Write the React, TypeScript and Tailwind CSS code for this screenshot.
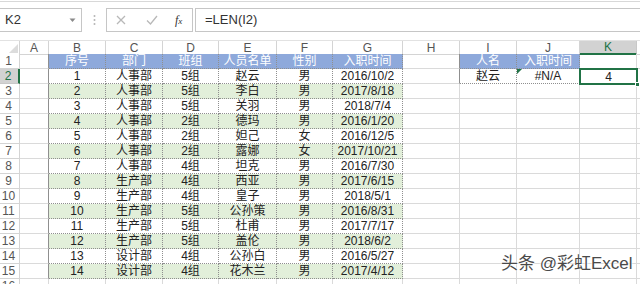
import React from "react";

const FONT = '"Liberation Sans", "Noto Sans CJK SC", sans-serif';

const rows: [number, string, string, string, string, string][] = [
  [1, "人事部", "5组", "赵云", "男", "2016/10/2"],
  [2, "人事部", "5组", "李白", "男", "2017/8/18"],
  [3, "人事部", "5组", "关羽", "男", "2018/7/4"],
  [4, "人事部", "2组", "德玛", "男", "2016/1/20"],
  [5, "人事部", "2组", "妲己", "女", "2016/12/5"],
  [6, "人事部", "2组", "露娜", "女", "2017/10/21"],
  [7, "人事部", "4组", "坦克", "男", "2016/7/30"],
  [8, "生产部", "4组", "西亚", "男", "2017/6/15"],
  [9, "生产部", "4组", "皇子", "男", "2018/5/1"],
  [10, "生产部", "5组", "公孙策", "男", "2016/8/31"],
  [11, "生产部", "5组", "杜甫", "男", "2017/7/17"],
  [12, "生产部", "5组", "盖伦", "男", "2018/6/2"],
  [13, "设计部", "4组", "公孙白", "男", "2016/5/27"],
  [14, "设计部", "4组", "花木兰", "男", "2017/4/12"],
];

const gridCols =
  "grid grid-cols-[20px_29px_57px_57px_56px_58px_56px_70px_57px_57px_63px_57px_3px]";

function Plain({ dottedRight = false }: { dottedRight?: boolean }) {
  return (
    <div
      className={
        dottedRight
          ? "border-b border-r border-b-[#dadada] border-r-[#8f8f8f] border-r-dotted"
          : "border-b border-r border-[#dadada]"
      }
    />
  );
}

function TCell({
  children,
  kind,
  bottomDotted = true,
}: {
  children?: React.ReactNode;
  kind: "head" | "green" | "white";
  bottomDotted?: boolean;
}) {
  const bg =
    kind === "head"
      ? "bg-[#8ea9db] text-white"
      : kind === "green"
      ? "bg-[#e2efda] text-[#222]"
      : "bg-white text-[#222]";
  return (
    <div
      className={`${bg} flex items-center justify-center border-r border-b border-dotted border-[#8f8f8f] ${
        bottomDotted ? "" : ""
      } text-[12px] leading-none whitespace-nowrap overflow-hidden`}
    >
      {children}
    </div>
  );
}

function RowHead({ n, active = false }: { n: number; active?: boolean }) {
  return (
    <div
      className={
        active
          ? "bg-[#d2d2d2] text-[#217346] border-b border-[#c8c8c8] border-r-2 border-r-[#217346] flex items-center justify-center text-[12px] leading-none pr-[2px]"
          : "bg-white text-[#555] border-b border-r border-[#d4d4d4] flex items-center justify-center text-[12px] leading-none pr-[2px]"
      }
    >
      {n}
    </div>
  );
}

export default function App() {
  const colLetters = ["A", "B", "C", "D", "E", "F", "G", "H", "I", "J", "K"];
  return (
    <div
      className="w-[640px] h-[284px] overflow-hidden bg-white relative"
      style={{ fontFamily: FONT }}
    >
      {/* formula bar */}
      <div className="h-[40px] flex flex-col">
        <div className="h-[2px] bg-white border-b border-[#d8d8d8]" />
        <div className="h-[6px]" />
        <div className="h-[24px] flex items-stretch">
          <div className="w-[82px] border border-l-0 border-[#c6c6c6] flex items-center justify-between pl-[5px] pr-[5px]">
            <span className="text-[13px] text-[#333]">K2</span>
            <svg width="7" height="5" viewBox="0 0 7 5">
              <path d="M0.5 0.5 L3.5 4 L6.5 0.5 Z" fill="#8a8a8a" />
            </svg>
          </div>
          <div className="w-[24px] flex items-center justify-center">
            <svg width="3" height="12" viewBox="0 0 3 12">
              <circle cx="1.5" cy="2" r="1" fill="#b5b5b5" />
              <circle cx="1.5" cy="6" r="1" fill="#b5b5b5" />
              <circle cx="1.5" cy="10" r="1" fill="#b5b5b5" />
            </svg>
          </div>
          <div className="w-[87px] border border-[#c6c6c6] flex items-center">
            <svg className="ml-[9px]" width="10" height="10" viewBox="0 0 10 10">
              <path d="M1 1 L9 9 M9 1 L1 9" stroke="#b8b8b8" strokeWidth="1.3" />
            </svg>
            <svg className="ml-[20px]" width="12" height="10" viewBox="0 0 12 10">
              <path d="M1 5.5 L4.5 9 L11 1" stroke="#b8b8b8" strokeWidth="1.3" fill="none" />
            </svg>
            <span
              className="ml-[17px] text-[12px] italic text-[#333]"
              style={{ fontFamily: '"Liberation Serif", serif' }}
            >
              f<span className="text-[9px]">x</span>
            </span>
          </div>
          <div className="w-[2px]" />
          <div className="flex-1 border border-r-0 border-[#c6c6c6] flex items-center pl-[9px]">
            <span className="text-[13px] text-[#333]">=LEN(I2)</span>
          </div>
        </div>
        <div className="flex-1" />
      </div>

      {/* column headers */}
      <div className={`${gridCols} h-[14px] border-t border-[#e2e2e2]`}>
        <div className="border-r border-b border-[#d4d4d4] flex items-end justify-end pr-[1px] pb-[1px]">
          <svg width="9" height="9" viewBox="0 0 9 9">
            <path d="M9 0 L9 9 L0 9 Z" fill="#dcdcdc" />
          </svg>
        </div>
        {colLetters.map((l) =>
          l === "K" ? (
            <div
              key={l}
              className="bg-[#d2d2d2] text-[#217346] border-r border-[#c8c8c8] border-b-2 border-b-[#217346] flex items-center justify-center text-[12px] leading-none"
            >
              {l}
            </div>
          ) : (
            <div
              key={l}
              className="text-[#555] border-r border-b border-[#d4d4d4] flex items-center justify-center text-[12px] leading-none"
            >
              {l}
            </div>
          )
        )}
        <div className="border-b border-[#d4d4d4]" />
      </div>

      {/* row 1 */}
      <div className={`${gridCols} h-[15px]`}>
        <RowHead n={1} />
        <Plain dottedRight />
        {["序号", "部门", "班组", "人员名单", "性别", "入职时间"].map((h) => (
          <TCell key={h} kind="head">
            {h}
          </TCell>
        ))}
        <Plain dottedRight />
        <TCell kind="head">人名</TCell>
        <TCell kind="head">入职时间</TCell>
        <Plain />
        <div className="border-b border-[#dadada]" />
      </div>

      {/* data rows */}
      {rows.map((r, i) => {
        const rowNum = i + 2;
        const kind = i % 2 === 1 ? "green" : "white";
        return (
          <div key={rowNum} className={`${gridCols} h-[15px]`}>
            <RowHead n={rowNum} active={rowNum === 2} />
            <Plain dottedRight />
            {r.map((v, j) => (
              <TCell key={j} kind={kind}>
                {v}
              </TCell>
            ))}
            {rowNum === 2 ? (
              <>
                <Plain dottedRight />
                <TCell kind="white">赵云</TCell>
                <div className="relative bg-white flex items-center justify-center border-r border-b border-dotted border-[#8f8f8f] text-[12px] leading-none text-[#222]">
                  <svg className="absolute left-0 top-0" width="5" height="5" viewBox="0 0 5 5">
                    <path d="M0 0 L5 0 L0 5 Z" fill="#217346" />
                  </svg>
                  #N/A
                </div>
                <div className="relative flex items-center justify-center text-[12px] leading-none text-[#222]">
                  <div className="absolute left-[-1px] top-[-1px] right-[-1px] bottom-[-1px] border-2 border-[#217346]" />
                  <div className="absolute right-[-3px] bottom-[-3px] w-[5px] h-[5px] bg-[#217346] border border-white" />
                  4
                </div>
                <div className="border-b border-[#dadada]" />
              </>
            ) : (
              <>
                <Plain />
                <Plain />
                <Plain />
                <Plain />
                <div className="border-b border-[#dadada]" />
              </>
            )}
          </div>
        );
      })}

      {/* row 16 partial */}
      <div className={`${gridCols} h-[15px]`}>
        <RowHead n={16} />
        {Array.from({ length: 11 }).map((_, k) => (
          <Plain key={k} />
        ))}
        <div />
      </div>

      {/* watermark */}
      <div
        className="absolute left-[501px] top-[255px] text-[17px] leading-none text-[#4a4a4a] whitespace-nowrap"
        style={{ textShadow: "0 0 2px #fff, 0 0 2px #fff, 0 0 3px #fff" }}
      >
        头条 @彩虹Excel
      </div>
    </div>
  );
}
